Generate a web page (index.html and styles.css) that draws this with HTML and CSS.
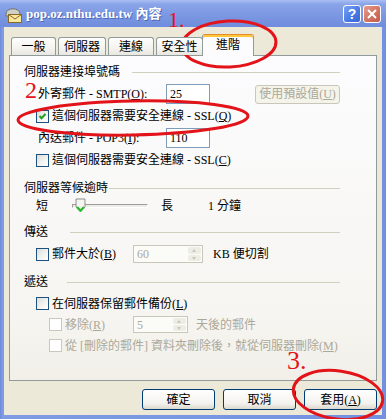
FILE: index.html
```html
<!DOCTYPE html>
<html lang="zh-Hant">

<head>
  <meta charset="UTF-8">
  <title>pop.oz.nthu.edu.tw 內容</title>
  <link rel="stylesheet" href="styles.css">
</head>

<body>
  <div class="window">
    <div class="titlebar">
      <svg class="app-icon" viewBox="0 0 18 18">
        <path d="M1 9 C1 2 15 2 15 9 L15 11 L1 11 Z" fill="#cfcfc8" stroke="#707070" />
        <rect x="3.5" y="9.5" width="13" height="8" fill="#fbe7a0" stroke="#8a6a20" />
        <path d="M3.5 9.5 L10 14 L16.5 9.5" fill="none" stroke="#8a6a20" />
      </svg>
      <span class="title">pop.oz.nthu.edu.tw 內容</span>
      <span class="tb-btn help">?</span>
      <span class="tb-btn close">
        <svg viewBox="0 0 16 16" width="16" height="16">
          <path d="M4 4 L12 12 M12 4 L4 12" stroke="#fff" stroke-width="2" />
        </svg>
      </span>
    </div>

    <div class="frame">
      <div class="tabs">
        <div class="tab t1">一般</div>
        <div class="tab t2">伺服器</div>
        <div class="tab t3">連線</div>
        <div class="tab t4">安全性</div>
        <div class="tab active">進階</div>
      </div>

      <div class="panel">
        <div class="section first">
          <div class="section-title">伺服器連接埠號碼<span class="rule ports"></span></div>
          <div class="rows">
            <div class="row">
              <span class="field-label">外寄郵件 - SMTP(<u>O</u>):</span>
              <span class="text-box">25</span>
              <span class="btn-default">使用預設值(<u>U</u>)</span>
            </div>
            <div class="row">
              <span class="box checked">
                <svg viewBox="0 0 11 11" width="11" height="11">
                  <path d="M2.5 5 L4.5 7.2 L8.5 3" fill="none" stroke="#21a121" stroke-width="2" />
                </svg>
              </span>
              <span>這個伺服器需要安全連線 - SSL(<u>Q</u>)</span>
            </div>
            <div class="row">
              <span class="field-label">內送郵件 - POP3(<u>I</u>):</span>
              <span class="text-box">110</span>
            </div>
            <div class="row">
              <span class="box"></span>
              <span>這個伺服器需要安全連線 - SSL(<u>C</u>)</span>
            </div>
          </div>
        </div>

        <div class="section">
          <div class="section-title">伺服器等候逾時<span class="rule timeout"></span></div>
          <div class="rows">
            <div class="row slider-row">
              <span>短</span>
              <span class="track">
                <svg class="thumb" viewBox="0 0 11 15" width="11" height="15">
                  <path d="M1 1 H10 V9 L5.5 14 L1 9 Z" fill="#f4f4f0" stroke="#8e8f8f" />
                  <path d="M2 9 L5.5 12.5 L9 9" fill="none" stroke="#21c121" stroke-width="2" />
                </svg>
              </span>
              <span class="long">長</span>
              <span class="minutes">1 分鐘</span>
            </div>
          </div>
        </div>

        <div class="section">
          <div class="section-title">傳送<span class="rule send"></span></div>
          <div class="rows">
            <div class="row">
              <span class="label-col"><span class="box"></span>郵件大於(<u>B</u>)</span>
              <span class="spin wide">
                <span class="spin-val">60</span>
                <span class="spin-btns"><i class="up"></i><i class="down"></i></span>
              </span>
              <span class="after">KB 便切割</span>
            </div>
          </div>
        </div>

        <div class="section compact">
          <div class="section-title">遞送<span class="rule deliver"></span></div>
          <div class="rows">
            <div class="row">
              <span class="box"></span>
              <span>在伺服器保留郵件備份(<u>L</u>)</span>
            </div>
            <div class="row sub disabled">
              <span class="label-col"><span class="box off"></span>移除(<u>R</u>)</span>
              <span class="spin narrow">
                <span class="spin-val">5</span>
                <span class="spin-btns"><i class="up"></i><i class="down"></i></span>
              </span>
              <span class="after days">天後的郵件</span>
            </div>
            <div class="row sub disabled">
              <span class="box off"></span>
              <span>從 [刪除的郵件] 資料夾刪除後，就從伺服器刪除(<u>M</u>)</span>
            </div>
          </div>
        </div>
      </div>

      <div class="actions">
        <span class="btn">確定</span>
        <span class="btn">取消</span>
        <span class="btn">套用(<u>A</u>)</span>
      </div>
    </div>

    <!-- red hand-drawn notes over the dialog -->
    <svg class="notes" viewBox="0 0 386 419" width="386" height="419">
      <ellipse cx="229" cy="44" rx="47" ry="23" transform="rotate(-3 229 44)" />
      <ellipse cx="133" cy="118" rx="115" ry="17" transform="rotate(-1 133 118)" />
      <ellipse cx="338" cy="395" rx="45" ry="24" transform="rotate(8 338 395)" />
    </svg>
    <span class="mark m1">1.</span>
    <span class="mark m2">2</span>
    <span class="mark m3">3.</span>
  </div>
</body>

</html>
```

FILE: styles.css
```css
* {
  margin: 0;
  padding: 0;
  box-sizing: border-box;
}

body {
  width: 386px;
  height: 419px;
  overflow: hidden;
  font-family: "Liberation Serif", "Noto Sans CJK TC", serif;
  font-size: 12px;
  line-height: 14px;
  color: #000;
  background: #7391e0;
}

u {
  text-decoration: underline;
}

.window {
  position: relative;
  width: 386px;
  height: 419px;
  display: flex;
  flex-direction: column;
  background: linear-gradient(90deg, #6b88da, #7e9be3 2px, #7391e0);
}

/* title bar */

.titlebar {
  height: 27px;
  display: flex;
  align-items: center;
  padding: 0 5px;
  background: linear-gradient(#a9bff3, #8aa4e8 15%, #7c98e2 55%, #6f8cdd);
}

.app-icon {
  width: 18px;
  height: 18px;
  margin-right: 3px;
}

.title {
  flex: 1;
  color: #fff;
  font-weight: bold;
  font-size: 13px;
  text-shadow: 1px 1px 0 #4d68b8;
}

.tb-btn {
  width: 18px;
  height: 18px;
  border: 1px solid #fff;
  border-radius: 3px;
  display: flex;
  align-items: center;
  justify-content: center;
  color: #fff;
  font-family: "Liberation Sans", sans-serif;
  font-weight: bold;
  font-size: 14px;
}

.help {
  margin-right: 2px;
  background: linear-gradient(135deg, #7aa4f4, #4677e4 60%, #3a68d6);
}

.close {
  background: linear-gradient(135deg, #e89b8b, #d0705f 60%, #c25b4b);
}

/* dialog body */

.frame {
  flex: 1;
  margin: 0 4px 4px;
  background: #ece9d8;
  padding: 7px 5px 5px;
  display: flex;
  flex-direction: column;
}

.tabs {
  display: flex;
  align-items: flex-end;
  height: 21px;
  padding-left: 2px;
  position: relative;
  z-index: 1;
}

.tab {
  height: 18px;
  margin-right: 2px;
  border: 1px solid #919b9c;
  border-bottom: 0;
  border-radius: 3px 3px 0 0;
  background: linear-gradient(#fefefe, #f4f3ef 60%, #e7e6df);
  display: flex;
  align-items: center;
  justify-content: center;
}

.t1 { width: 45px; }
.t2 { width: 48px; }
.t3 { width: 46px; }
.t4 { width: 47px; }

.tab.active {
  width: 52px;
  height: 22px;
  margin-left: -3px;
  margin-bottom: -1px;
  padding-bottom: 2px;
  background: #fcfcfe;
  border-top: 1px solid #e68b2c;
  box-shadow: inset 0 2px 0 #ffc83c;
}

.panel {
  height: 326px;
  border: 1px solid #919b9c;
  background: linear-gradient(#fcfcfe, #f6f5f1 80%, #f1efe8);
  padding: 8px 36px 0 14px;
}

.section {
  margin-top: 9px;
}

.section.first {
  margin-top: 0;
}

.section-title {
  display: flex;
  align-items: center;
  height: 16px;
}

.rule {
  flex: 1;
  height: 1px;
  background: #d0d0bf;
}

.rule.ports { margin-left: 12px; }
.rule.timeout { margin-left: 1px; }
.rule.send { margin-left: 22px; }
.rule.deliver { margin-left: 19px; }

.rows {
  padding-top: 3px;
}

.row {
  display: flex;
  align-items: center;
  height: 22px;
  padding-left: 12px;
  white-space: nowrap;
}

.compact .row {
  height: 21px;
}

.row.sub {
  padding-left: 25px;
}

.disabled {
  color: #aca899;
}

.field-label {
  width: 130px;
  padding-left: 2px;
}

.text-box {
  width: 44px;
  height: 20px;
  border: 1px solid #7f9db9;
  background: #fff;
  padding-left: 3px;
  line-height: 18px;
}

.btn-default {
  margin-left: auto;
  width: 85px;
  height: 19px;
  border: 1px solid #c9c7ba;
  border-radius: 3px;
  background: #f5f4ea;
  color: #aca899;
  display: flex;
  align-items: center;
  justify-content: center;
}

.box {
  flex: none;
  width: 13px;
  height: 13px;
  margin-right: 3px;
  border: 1px solid #1c5180;
  background: linear-gradient(135deg, #dcdcd7, #f4f4f1 60%, #fff);
  display: inline-flex;
}

.box.off {
  border-color: #cac8bb;
  background: #fff;
}

.label-col {
  display: flex;
  align-items: center;
  width: 97px;
}

.sub .label-col {
  width: 84px;
}

.spin {
  display: flex;
  height: 18px;
  border: 1px solid #c9c7ba;
  background: #fbfbf8;
  color: #aca899;
}

.spin.wide { width: 70px; }
.spin.narrow { width: 55px; height: 17px; }

.spin-val {
  flex: 1;
  padding-left: 3px;
  line-height: 16px;
}

.spin-btns {
  width: 15px;
  display: flex;
  flex-direction: column;
  padding: 1px;
  gap: 1px;
}

.spin-btns i {
  flex: 1;
  border-radius: 2px;
  background: #eeede5;
  position: relative;
}

.spin-btns i::after {
  content: "";
  position: absolute;
  left: 4px;
  border-left: 2.5px solid transparent;
  border-right: 2.5px solid transparent;
}

.spin-btns .up::after {
  top: 2px;
  border-bottom: 3px solid #c9c7ba;
}

.spin-btns .down::after {
  top: 2px;
  border-top: 3px solid #c9c7ba;
}

.after {
  margin-left: 10px;
}

.after.days {
  margin-left: 8px;
}

.slider-row {
  height: 18px;
  margin-top: -2px;
}

.track {
  position: relative;
  width: 76px;
  height: 4px;
  margin-left: 24px;
  border-top: 1px solid #9d9c99;
  border-left: 1px solid #9d9c99;
  border-bottom: 1px solid #fff;
  border-right: 1px solid #fff;
  background: #ecebe6;
}

.thumb {
  position: absolute;
  left: 2px;
  top: -7px;
}

.long {
  margin-left: 13px;
}

.minutes {
  margin-left: 35px;
}

/* bottom buttons */

.actions {
  display: flex;
  justify-content: flex-end;
  gap: 8px;
  margin-top: 8px;
}

.btn {
  width: 73px;
  height: 21px;
  border: 1px solid #003c74;
  border-radius: 3px;
  background: linear-gradient(#fff, #f3f2ee 70%, #dcd8cc);
  display: flex;
  align-items: center;
  justify-content: center;
}

/* red annotations */

.notes {
  position: absolute;
  left: 0;
  top: 0;
  pointer-events: none;
}

.notes ellipse {
  fill: none;
  stroke: #e2141a;
  stroke-width: 3;
}

.mark {
  position: absolute;
  color: #e2141a;
  font-family: "Liberation Serif", serif;
  line-height: 1;
}

.m1 {
  left: 168px;
  top: 9px;
  font-size: 22px;
}

.m2 {
  left: 25px;
  top: 78px;
  font-size: 24px;
}

.m3 {
  left: 287px;
  top: 348px;
  font-size: 26px;
}
```
